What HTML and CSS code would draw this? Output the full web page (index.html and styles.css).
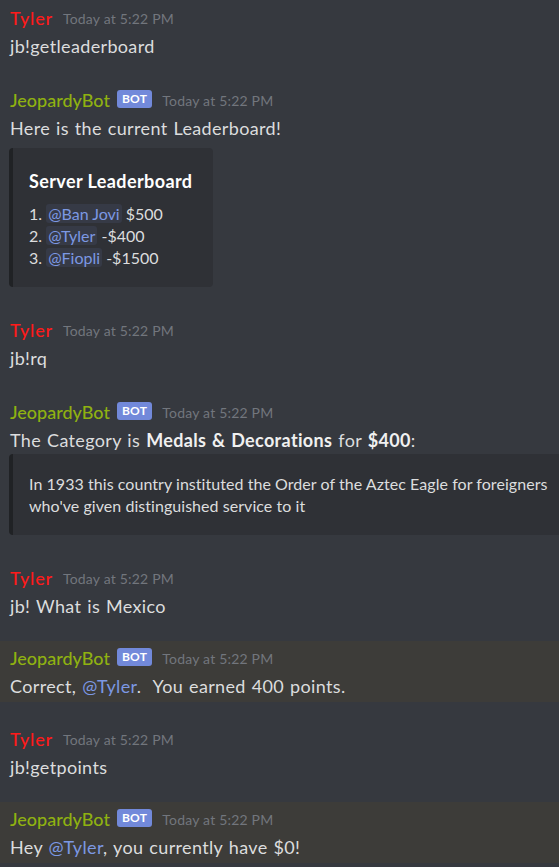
FILE: index.html
```html
<!DOCTYPE html>
<html>
<head>
<meta charset="utf-8">
<link rel="stylesheet" href="styles.css">
</head>
<body>
<div class="chat">
  <div class="msg">
    <div class="head"><span class="name user">Tyler</span><span class="time">Today at 5:22 PM</span></div>
    <div class="text">jb!getleaderboard</div>
  </div>
  <div class="msg">
    <div class="head"><span class="name bot">JeopardyBot</span><span class="tag">BOT</span><span class="time">Today at 5:22 PM</span></div>
    <div class="text">Here is the current Leaderboard!</div>
    <div class="embed board">
      <div class="etitle">Server Leaderboard</div>
      <div class="edesc">
        <div>1. <span class="ment">@Ban Jovi</span> $500</div>
        <div>2. <span class="ment">@Tyler</span> -$400</div>
        <div>3. <span class="ment">@Fiopli</span> -$1500</div>
      </div>
    </div>
  </div>
  <div class="msg">
    <div class="head"><span class="name user">Tyler</span><span class="time">Today at 5:22 PM</span></div>
    <div class="text">jb!rq</div>
  </div>
  <div class="msg">
    <div class="head"><span class="name bot">JeopardyBot</span><span class="tag">BOT</span><span class="time">Today at 5:22 PM</span></div>
    <div class="text">The Category is <b>Medals &amp; Decorations</b> for <b>$400</b>:</div>
    <div class="embed quote">
      <div class="qdesc">In 1933 this country instituted the Order of the Aztec Eagle for foreigners who've given distinguished service to it</div>
    </div>
  </div>
  <div class="msg">
    <div class="head"><span class="name user">Tyler</span><span class="time">Today at 5:22 PM</span></div>
    <div class="text">jb! What is Mexico</div>
  </div>
  <div class="msg hl">
    <div class="head"><span class="name bot">JeopardyBot</span><span class="tag">BOT</span><span class="time">Today at 5:22 PM</span></div>
    <div class="text">Correct, <span class="mention">@Tyler</span>.&nbsp; You earned 400 points.</div>
  </div>
  <div class="msg">
    <div class="head"><span class="name user">Tyler</span><span class="time">Today at 5:22 PM</span></div>
    <div class="text">jb!getpoints</div>
  </div>
  <div class="msg hl">
    <div class="head"><span class="name bot">JeopardyBot</span><span class="tag">BOT</span><span class="time">Today at 5:22 PM</span></div>
    <div class="text">Hey <span class="mention">@Tyler</span>, you currently have $0!</div>
  </div>
</div>
</body>
</html>
```

FILE: styles.css
```css
html, body {
  margin: 0;
  padding: 0;
  background: #36393f;
  height: 100%;
  overflow: hidden;
}
body {
  font-family: Lato, "Noto Sans", sans-serif;
  color: #dcddde;
}
.chat {
  padding-top: 1px;
  display: flex;
  flex-direction: column;
  gap: 22px;
}
.msg {
  padding: 6px 0 4px 10px;
}
.msg.hl {
  background: #3d3c39;
  margin: -2px 0;
  padding-bottom: 5px;
}
.head {
  display: flex;
  align-items: center;
  height: 22px;
  margin-bottom: 6px;
  white-space: nowrap;
}
.name {
  font-size: 18px;
  font-weight: 500;
}
.name.user {
  color: #ff1a1a;
  letter-spacing: 0.8px;
}
.name.bot { color: #8fb111; }
.tag {
  margin-left: 7px;
  background: #7289da;
  color: #fff;
  font-size: 12px;
  font-weight: 700;
  height: 18px;
  line-height: 18px;
  padding: 0 5px;
  border-radius: 3px;
  margin-top: -2px;
  letter-spacing: 0.3px;
}
.time {
  margin-left: 10px;
  font-size: 14px;
  letter-spacing: 0.2px;
  color: #72767d;
}
.text {
  font-size: 18px;
  letter-spacing: 0.35px;
  word-spacing: 1px;
  line-height: 22px;
  white-space: nowrap;
}
.text b { color: #f0f0f0; }
.mention { color: #7c98e3; }
.embed {
  box-sizing: border-box;
  background: #2f3136;
  border-left: 4px solid #202225;
  border-radius: 4px;
  margin-left: -1px;
}
.board {
  width: 204px;
  margin-top: 9px;
  padding: 22px 16px 18px 16px;
}
.etitle {
  font-size: 18px;
  font-weight: 700;
  letter-spacing: 0.4px;
  color: #ffffff;
  line-height: 22px;
  white-space: nowrap;
}
.edesc {
  margin-top: 11px;
  font-size: 16px;
  line-height: 22px;
  white-space: nowrap;
}
.ment {
  color: #7c98e3;
  background: rgba(114, 137, 218, 0.1);
  border-radius: 3px;
  padding: 0 2px;
}
.quote {
  margin-top: 3px;
  margin-right: -20px;
  padding: 19px 0 18px 16px;
}
.qdesc {
  font-size: 16px;
  letter-spacing: 0.05px;
  line-height: 22px;
}
```
